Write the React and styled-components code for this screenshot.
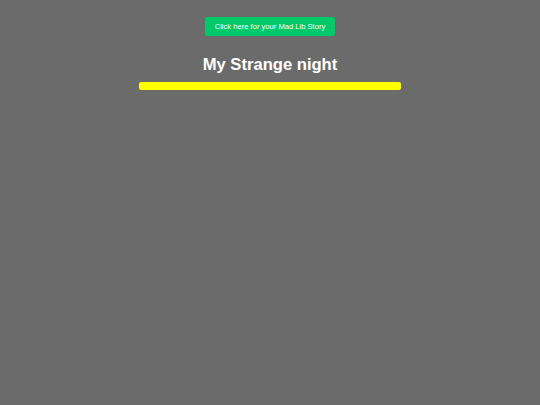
import React from "react";
import styled, { createGlobalStyle } from "styled-components";

const GlobalStyle = createGlobalStyle`
  html, body {
    margin: 0;
    padding: 0;
    background: #6b6b6b;
    font-family: "Liberation Sans", Arial, sans-serif;
  }
`;

const Page = styled.div`
  min-height: 405px;
  display: flex;
  flex-direction: column;
  align-items: center;
  padding-top: 17px;
  box-sizing: border-box;
`;

const StoryButton = styled.button`
  width: 130px;
  height: 19px;
  padding: 0;
  border: 0;
  border-radius: 2px;
  background: #00c96a;
  color: #ffffff;
  font-family: "Liberation Sans", Arial, sans-serif;
  font-size: 7.6px;
  cursor: pointer;
`;

const Title = styled.h1`
  margin: 19px 0 0;
  color: #ffffff;
  font-size: 16.6px;
  font-weight: bold;
  line-height: 20px;
`;

const Bar = styled.div`
  margin-top: 7px;
  width: 262px;
  height: 8px;
  border-radius: 2px;
  background: #ffff00;
`;

export default function App() {
  return (
    <>
      <GlobalStyle />
      <Page>
        <StoryButton>Click here for your Mad Lib Story</StoryButton>
        <Title>My Strange night</Title>
        <Bar />
      </Page>
    </>
  );
}
